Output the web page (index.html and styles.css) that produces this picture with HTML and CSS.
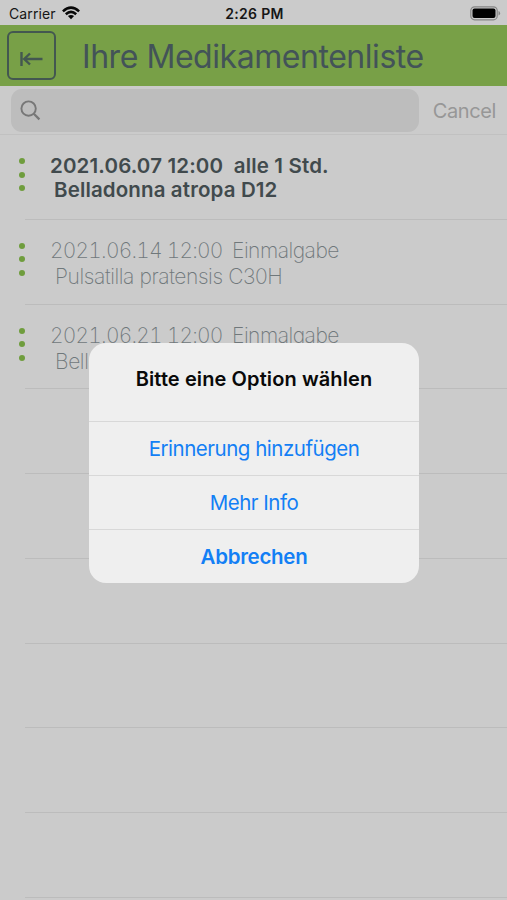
FILE: index.html
```html
<!DOCTYPE html>
<html lang="de">
<head>
<meta charset="utf-8">
<title>Ihre Medikamentenliste</title>
<link rel="stylesheet" href="styles.css">
</head>
<body>
<div class="screen">
  <div class="status">
    <span class="carrier"><span class="carrier-name">Carrier</span>
      <svg class="wifi" width="18" height="14" viewBox="0 0 18 14"><g fill="none" stroke="#080808" stroke-width="2.5"><path d="M.9 5.3Q9-2.1 17.1 5.3"/><path d="M3.8 8.2Q9 3.5 14.2 8.2"/></g><path d="M5.9 10.1Q9 7.7 12.1 10.1L9 13.3Z" fill="#080808"/></svg>
    </span>
    <span class="time">2:26 PM</span>
    <svg class="battery" width="31" height="15" viewBox="0 0 31 15"><rect x=".8" y=".8" width="26.4" height="13" rx="3.8" fill="none" stroke="#858585" stroke-width="1.2"/><rect x="2.5" y="2.5" width="23" height="9.6" rx="2" fill="#000"/><path d="M28.5 5v4.6q1.6-.6 1.6-2.3T28.5 5Z" fill="#858585"/></svg>
  </div>
  <header class="header">
    <button class="back" aria-label="Zurück"><svg width="24" height="16" viewBox="0 0 24 16" fill="none" stroke="#435750" stroke-width="2.4"><path d="M1.5 1v14M3.8 8H22.5M10 2.5L4.2 8l5.8 5.5"/></svg></button>
    <h1 class="title">Ihre Medikamentenliste</h1>
  </header>
  <div class="search">
    <div class="field"><svg width="22" height="22" viewBox="0 0 22 22" fill="none" stroke="#777" stroke-width="1.9"><circle cx="8.6" cy="8.6" r="7.2"/><path d="M13.8 13.8l5.6 5.6" stroke-width="2.3"/></svg></div>
    <span class="cancel">Cancel</span>
  </div>
  <main class="list">
    <div class="row bold"><span class="dots"><i></i><i></i><i></i></span><div class="entry"><p class="when">2021.06.07 12:00&nbsp; alle 1 Std.</p><p class="drug">Belladonna atropa D12</p></div></div>
    <div class="row"><span class="dots"><i></i><i></i><i></i></span><div class="entry"><p class="when"><span class="date">2021.06.14 12:00</span><span class="dose">Einmalgabe</span></p><p class="drug">Pulsatilla pratensis C30H</p></div></div>
    <div class="row"><span class="dots"><i></i><i></i><i></i></span><div class="entry"><p class="when"><span class="date">2021.06.21 12:00</span><span class="dose">Einmalgabe</span></p><p class="drug">Belladonna</p></div></div>
    <div class="row"></div><div class="row"></div><div class="row"></div><div class="row"></div><div class="row"></div><div class="row"></div>
  </main>
  <div class="dialog" role="dialog">
    <h2 class="question">Bitte eine Option wählen</h2>
    <button class="option add">Erinnerung hinzufügen</button>
    <button class="option info">Mehr Info</button>
    <button class="option abort">Abbrechen</button>
  </div>
</div>
</body>
</html>
```
FILE: styles.css
```css
* { box-sizing: border-box; margin: 0; padding: 0; }
body { background: #cbcbcb; font-family: Inter, "Liberation Sans", sans-serif; }
p, h1, h2, span, button { white-space: nowrap; }
button { font-family: inherit; background: none; border: 0; }
svg { display: block; flex: none; }
.screen { position: relative; width: 507px; height: 900px; overflow: hidden; }
.status { height: 25px; display: grid; grid-template-columns: 1fr auto 1fr; align-items: center; padding: 2px 7px 0 9px; color: #161616; }
.carrier { display: flex; align-items: center; gap: 6px; font-size: 14px; }
.carrier-name { width: 47px; letter-spacing: .1px; }
.wifi { margin-top: -2px; }
.time { font-size: 14px; font-weight: 600; letter-spacing: .3px; }
.battery { justify-self: end; margin-top: -1px; margin-right: -1px; }
.header { height: 61px; display: flex; align-items: center; background: #78a047; padding-left: 7px; }
.back { width: 49px; height: 49px; border: 2px solid #435750; border-radius: 6px; display: flex; align-items: center; justify-content: center; padding-top: 6px; }
.title { margin: 2px 0 0 26px; font-size: 32px; font-weight: 400; color: #435358; letter-spacing: -.45px; }
.search { height: 49px; display: flex; align-items: center; padding: 0 11px; border-bottom: 1px solid #c1c1c1; }
.field { width: 408px; height: 43px; border-radius: 11px; background: #bdbdbd; display: flex; align-items: center; padding: 2px 0 0 9px; }
.cancel { margin: 1px 0 0 14px; font-size: 20px; color: #979797; letter-spacing: -.4px; }
.row { height: 84.75px; display: flex; position: relative; padding: 18px 0 0 19px; }
.row::after { content: ""; position: absolute; left: 25px; right: 0; bottom: 0; height: 1px; background: #bcbcbc; }
.dots { width: 6px; display: flex; flex-direction: column; gap: 7.6px; padding-top: 5px; }
.dots i { width: 6px; height: 6px; border-radius: 50%; background: #6f9d3d; }
.entry { margin-left: 25px; color: #70787b; font-size: 21px; font-weight: 200; line-height: 26px; }
.drug { padding-left: 5px; letter-spacing: -.4px; }
.when { display: flex; }
.date { width: 182px; font-variant-numeric: tabular-nums; letter-spacing: -.8px; }
.dose { letter-spacing: -.5px; }
.bold .entry { padding-top: 1px; color: #414a4d; font-weight: 600; font-size: 20.5px; line-height: 24px; }
.bold .when { letter-spacing: .15px; }
.bold .drug { padding-left: 4px; letter-spacing: .13px; }
.dialog { position: absolute; left: 89px; top: 343px; width: 330px; height: 240px; border-radius: 17px; overflow: hidden; background: #efefef; display: grid; grid-template-rows: 78px 54px 54px 54px; }
.question { font-size: 20px; font-weight: 600; color: #090909; text-align: center; line-height: 73px; letter-spacing: .1px; }
.option { border-top: 1px solid #d8d8d8; font-size: 20.5px; color: #137ff5; letter-spacing: -.48px; }
.abort { font-weight: 600; letter-spacing: -.3px; }
```
